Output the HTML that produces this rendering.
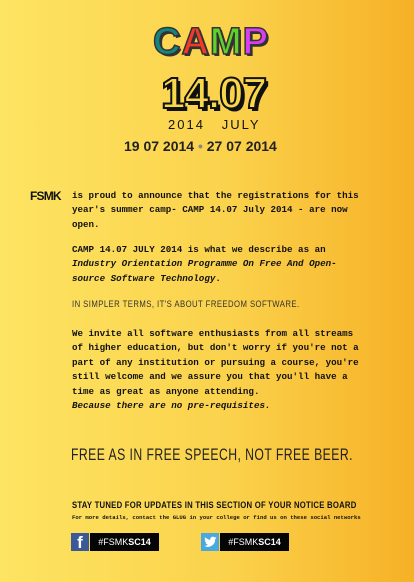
<!DOCTYPE html>
<html><head><meta charset="utf-8"><style>
*{margin:0;padding:0;box-sizing:border-box}
body{width:414px;height:582px;overflow:hidden;background:linear-gradient(90deg,#fde462 0%,#fbd24c 55%,#f6b126 100%);font-family:"Liberation Mono",monospace;color:#111;position:relative}
.a{position:absolute;white-space:nowrap}
.m{font-size:9.2px;font-weight:bold;line-height:14.4px}
.thin{font-family:"Liberation Sans",sans-serif;font-weight:normal;letter-spacing:0.5px;transform-origin:0 0}
</style></head><body>
<div class="a" style="left:153px;top:21px;font-family:'Liberation Sans',sans-serif;font-weight:900;font-size:38px;letter-spacing:1px;-webkit-text-stroke:1.5px #333;text-shadow:2px 2px 0 #333">
<span style="color:#16857f">C</span><span style="color:#f23a2a">A</span><span style="color:#5ed12b">M</span><span style="color:#d93ff0">P</span></div>
<div class="a" style="left:161px;top:72px;font-family:'Liberation Sans',sans-serif;font-weight:bold;font-size:44px;color:#f9d74a;-webkit-text-stroke:2px #111;text-shadow:3px 3px 0 #111;line-height:44px;letter-spacing:-1px">14.07</div>
<div class="a thin" style="left:168px;top:117px;font-size:13px;letter-spacing:2px">2014 &nbsp;&nbsp;JULY</div>
<div class="a" style="left:124px;top:138px;font-family:'Liberation Sans',sans-serif;font-weight:bold;font-size:14px;color:#222">19 07 2014 <span style="color:#888">•</span> 27 07 2014</div>
<div class="a" style="left:30px;top:189px;font-family:'Liberation Sans',sans-serif;font-weight:900;font-size:12px;letter-spacing:-0.8px">FSMK</div>
<div class="a m" style="left:72px;top:189px">is proud to announce that the registrations for this<br>year's summer camp- CAMP 14.07 July 2014 - are now<br>open.</div>
<div class="a m" style="left:72px;top:243px">CAMP 14.07 JULY 2014 is what we describe as an<br><i>Industry Orientation Programme On Free And Open-</i><br><i>source Software Technology</i>.</div>
<div class="a thin" style="left:72px;top:299px;font-size:9px;color:#333;transform:scaleX(0.86)">IN SIMPLER TERMS, IT'S ABOUT FREEDOM SOFTWARE.</div>
<div class="a m" style="left:72px;top:327px">We invite all software enthusiasts from all streams<br>of higher education, but don't worry if you're not a<br>part of any institution or pursuing a course, you're<br>still welcome and we assure you that you'll have a<br>time as great as anyone attending.<br><i>Because there are no pre-requisites.</i></div>
<div class="a thin" style="left:71px;top:446px;font-size:16.5px;color:#222;letter-spacing:0.6px;transform:scaleX(0.74)">FREE AS IN FREE SPEECH, NOT FREE BEER.</div>
<div class="a" style="left:72px;top:500px;font-family:'Liberation Sans',sans-serif;font-weight:bold;font-size:9.2px;letter-spacing:0.3px;transform:scaleX(0.84);transform-origin:0 0">STAY TUNED FOR UPDATES IN THIS SECTION OF YOUR NOTICE BOARD</div>
<div class="a" style="left:72px;top:514px;font-weight:bold;font-size:5.6px">For more details, contact the GLUG in your college or find us on these social networks</div>
<div class="a" style="left:71px;top:533px;width:18px;height:18px;background:#3b5998;color:#fff;font-family:'Liberation Sans',sans-serif;font-weight:bold;font-size:17px;text-align:center;line-height:20px">f</div>
<div class="a" style="left:90px;top:533px;width:69px;height:18px;background:#050505;color:#fff;font-family:'Liberation Sans',sans-serif;font-size:9px;line-height:18px;text-align:center">#FSMK<b>SC14</b></div>
<div class="a" style="left:201px;top:533px;width:18px;height:18px;background:#4aa8e0"><svg width="18" height="18" viewBox="0 0 24 24"><path fill="#fff" d="M21 6.5c-.6.3-1.3.5-2 .6.7-.4 1.3-1.1 1.5-1.9-.7.4-1.4.7-2.2.8a3.4 3.4 0 0 0-5.8 3.1A9.7 9.7 0 0 1 5.5 5.5a3.4 3.4 0 0 0 1 4.6c-.5 0-1-.2-1.5-.4 0 1.700 1.2 3 2.7 3.4-.5.1-1 .1-1.500 0 .4 1.4 1.7 2.4 3.2 2.4A6.9 6.9 0 0 1 4 17a9.7 9.7 0 0 0 14.9-8.6c.7-.5 1.300-1.1 1.8-1.9z"/></svg></div>
<div class="a" style="left:220px;top:533px;width:69px;height:18px;background:#050505;color:#fff;font-family:'Liberation Sans',sans-serif;font-size:9px;line-height:18px;text-align:center">#FSMK<b>SC14</b></div>
</body></html>
